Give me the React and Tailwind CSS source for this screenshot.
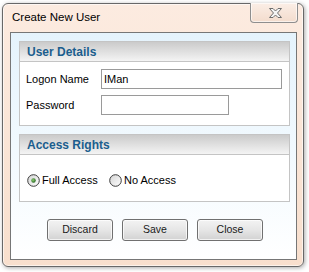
import React from "react";

function Radio({ checked }) {
  return (
    <svg width="13" height="13" viewBox="0 0 13 13" className="shrink-0">
      <defs>
        <linearGradient id={checked ? "rg1" : "rg2"} x1="0" y1="0" x2="1" y2="1">
          <stop offset="0" stopColor="#d4d4d4" />
          <stop offset="1" stopColor="#ffffff" />
        </linearGradient>
        <radialGradient id="dot" cx="0.4" cy="0.4" r="0.6">
          <stop offset="0" stopColor="#8fd070" />
          <stop offset="1" stopColor="#2a6a26" />
        </radialGradient>
      </defs>
      <circle cx="6.5" cy="6.5" r="5.8" fill={`url(#${checked ? "rg1" : "rg2"})`} stroke="#3c3c3c" strokeWidth="1" />
      {checked && <circle cx="6.5" cy="6.5" r="2.2" fill="url(#dot)" />}
    </svg>
  );
}

function Group({ title, children, h }) {
  return (
    <div className={`w-[271px] ${h} border border-[#c4c4c4] bg-white flex flex-col`}>
      <div className="h-[20px] shrink-0 border-b border-[#c4c4c4] bg-gradient-to-b from-[#cbcbcb] to-[#f4f4f4] flex items-center pl-[7px]">
        <span className="text-[12px] font-bold text-[#1b5e8e] leading-none">{title}</span>
      </div>
      {children}
    </div>
  );
}

function Btn({ children }) {
  return (
    <div className="w-[66px] h-[22px] rounded-[3px] border border-[#707070] bg-gradient-to-b from-[#f3f3f3] via-[#e6e6e6] to-[#d2d2d2] flex items-center justify-center text-[10.5px] text-[#1a1a1a] shadow-[inset_0_0_0_1px_rgba(255,255,255,0.7)]">
      {children}
    </div>
  );
}

export default function App() {
  return (
    <div
      className="w-[309px] h-[272px] bg-white overflow-hidden pt-[3px] pl-[2px]"
      style={{ fontFamily: '"Liberation Sans", Arial, sans-serif' }}
    >
      <div className="w-[302px] h-[264px] rounded-[6px] border border-[#686868] bg-gradient-to-b from-[#fcebe0] to-[#f8dfcd] shadow-[1px_1px_4px_rgba(0,0,0,0.35),inset_0_0_0_1px_rgba(255,255,255,0.6)] flex flex-col pl-[7px] pr-[6px] pb-[6px]">
        <div className="h-[28px] shrink-0 flex items-center relative">
          <span className="pl-[2px] text-[11.5px] text-black">Create New User</span>
          <div className="absolute right-[-1px] top-[-1px] w-[48px] h-[20px] rounded-b-[4px] border border-t-0 border-[#8e8e8e] bg-gradient-to-b from-[#fbeee6] to-[#f3dccd] flex items-center justify-center shadow-[inset_0_0_0_1px_rgba(255,255,255,0.6)]">
            <svg width="13" height="10" viewBox="0 0 13 10" className="ml-[3px]">
              <polygon
                points="0.5,0.5 4,0.5 6.5,3 9,0.5 12.5,0.5 8.5,5 12.5,9.5 9,9.5 6.5,7 4,9.5 0.5,9.5 4.5,5"
                fill="#f4f4f4"
                stroke="#6e6e6e"
                strokeWidth="1"
                strokeLinejoin="round"
              />
            </svg>
          </div>
        </div>
        <div className="flex-1 border border-[#767676] bg-gradient-to-b from-[#e5f3fc] via-[#f1f9fe] to-white flex flex-col pl-[8px] pt-[8px]">
          <Group title="User Details" h="h-[85px]">
            <div className="flex flex-col pt-[7px] pl-[6px] gap-[6px] text-[11px] text-black">
              <div className="flex items-center h-[20px]">
                <span className="w-[75px]">Logon Name</span>
                <div className="w-[181px] h-[20px] border border-[#9a9a9a] bg-white flex items-center pl-[2px]">IMan</div>
              </div>
              <div className="flex items-center h-[20px]">
                <span className="w-[75px]">Password</span>
                <div className="w-[128px] h-[20px] border border-[#9a9a9a] bg-white"></div>
              </div>
            </div>
          </Group>
          <div className="h-[8px]" />
          <Group title="Access Rights" h="h-[68px]">
            <div className="flex items-center pt-[19px] pl-[7px] h-[32px] text-[11px] text-black">
              <div className="flex items-center gap-[2px] w-[82px]">
                <Radio checked />
                <span>Full Access</span>
              </div>
              <div className="flex items-center gap-[2px]">
                <Radio />
                <span>No Access</span>
              </div>
            </div>
          </Group>
          <div className="flex gap-[9px] pl-[28px] mt-[17px]">
            <Btn>Discard</Btn>
            <Btn>Save</Btn>
            <Btn>Close</Btn>
          </div>
        </div>
      </div>
    </div>
  );
}
